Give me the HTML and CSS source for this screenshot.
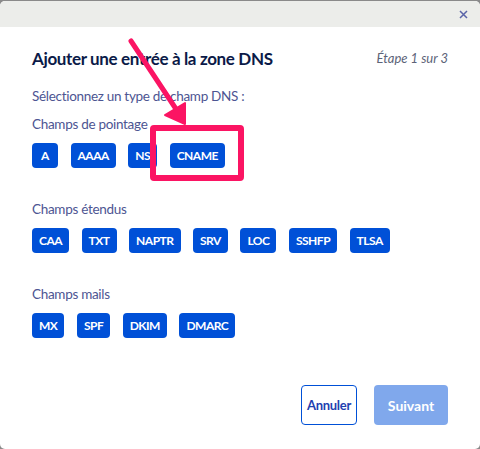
FILE: index.html
```html
<!DOCTYPE html>
<html lang="fr">
<head>
<meta charset="utf-8">
<link rel="stylesheet" href="styles.css">
</head>
<body>
<div class="modal">
  <div class="modal-head">
    <button class="close" aria-label="Fermer">
      <svg width="9" height="9" viewBox="0 0 9 9"><path d="M1 1L8 8M8 1L1 8" stroke="#5a64a8" stroke-width="1.5"/></svg>
    </button>
  </div>
  <div class="modal-body">
    <div class="title-row">
      <h1 class="title">Ajouter une entrée à la zone DNS</h1>
      <span class="step">Étape 1 sur 3</span>
    </div>
    <p class="intro">Sélectionnez un type de champ DNS :</p>

    <p class="group-label first">Champs de pointage</p>
    <div class="tags">
      <span class="tag">A</span>
      <span class="tag">AAAA</span>
      <span class="tag">NS</span>
      <span class="tag">CNAME</span>
    </div>

    <p class="group-label">Champs étendus</p>
    <div class="tags">
      <span class="tag">CAA</span>
      <span class="tag">TXT</span>
      <span class="tag">NAPTR</span>
      <span class="tag">SRV</span>
      <span class="tag">LOC</span>
      <span class="tag">SSHFP</span>
      <span class="tag">TLSA</span>
    </div>

    <p class="group-label">Champs mails</p>
    <div class="tags">
      <span class="tag">MX</span>
      <span class="tag">SPF</span>
      <span class="tag">DKIM</span>
      <span class="tag">DMARC</span>
    </div>

    <div class="actions">
      <button class="btn btn-outline">Annuler</button>
      <button class="btn btn-primary">Suivant</button>
    </div>
  </div>

  <div class="highlight"></div>
  <svg class="arrow" width="480" height="449" viewBox="0 0 480 449">
    <line x1="131" y1="41" x2="176" y2="109" stroke="#fb1463" stroke-width="5" stroke-linecap="round"/>
    <polygon points="185,124 165,115 185,103" fill="#fb1463" stroke="#fb1463" stroke-width="2" stroke-linejoin="round"/>
  </svg>
</div>
</body>
</html>
```

FILE: styles.css
```css
* { box-sizing: border-box; }
html, body { margin: 0; padding: 0; }
body {
  background: #8a8a8a;
  width: 480px;
  height: 449px;
  overflow: hidden;
  font-family: "Lato", "Liberation Sans", sans-serif;
}
.modal {
  position: relative;
  margin-top: 1px;
  width: 480px;
  height: 448px;
  background: #ffffff;
  border-radius: 5px;
  overflow: hidden;
}
.modal-head {
  height: 26px;
  background: #ecedea;
  display: flex;
  justify-content: flex-end;
  align-items: center;
  padding-right: 12px;
}
.close {
  border: 0;
  background: transparent;
  padding: 0;
  width: 9px;
  height: 9px;
  display: flex;
  cursor: pointer;
}
.modal-body {
  padding: 19px 32px 0 32px;
}
.title-row {
  display: flex;
  justify-content: space-between;
  align-items: center;
  height: 24px;
}
.title {
  margin: 0;
  font-size: 17px;
  font-weight: 700;
  color: #0b1a48;
  letter-spacing: -0.35px;
}
.step {
  font-size: 13px;
  font-style: italic;
  color: #5c6378;
}
.intro {
  margin: 17px 0 0 0;
  font-size: 13.5px;
  letter-spacing: -0.3px;
  line-height: 18px;
  color: #4d5592;
}
.group-label {
  margin: 32px 0 0 0;
  font-size: 13.5px;
  letter-spacing: -0.3px;
  line-height: 18px;
  color: #4d5592;
}
.group-label.first { margin-top: 10px; }
.tags {
  display: flex;
  gap: 12.5px;
  margin-top: 10px;
}
.tag {
  display: inline-flex;
  align-items: center;
  justify-content: center;
  height: 25px;
  min-width: 26px;
  padding: 0 7px;
  background: #0050d7;
  color: #ffffff;
  font-size: 12px;
  letter-spacing: -0.5px;
  font-weight: 700;
  border-radius: 4px;
}
.actions {
  display: flex;
  justify-content: flex-end;
  gap: 17px;
  margin-top: 47px;
}
.btn {
  height: 40px;
  border-radius: 4px;
  font-family: inherit;
  font-size: 13px;
  font-weight: 700;
}
.btn-outline {
  width: 56px;
  padding: 0;
  background: #ffffff;
  border: 1.5px solid #0050d7;
  color: #2340b0;
  letter-spacing: -0.3px;
}
.btn-primary {
  width: 74px;
  padding: 0;
  background: #80a8ec;
  border: 0;
  color: #ffffff;
  font-size: 14px;
}
.highlight {
  position: absolute;
  left: 150px;
  top: 124px;
  width: 94px;
  height: 56px;
  border: 6px solid #fb1463;
  border-radius: 4px;
}
.arrow {
  position: absolute;
  left: 0;
  top: -1px;
  pointer-events: none;
}
```
